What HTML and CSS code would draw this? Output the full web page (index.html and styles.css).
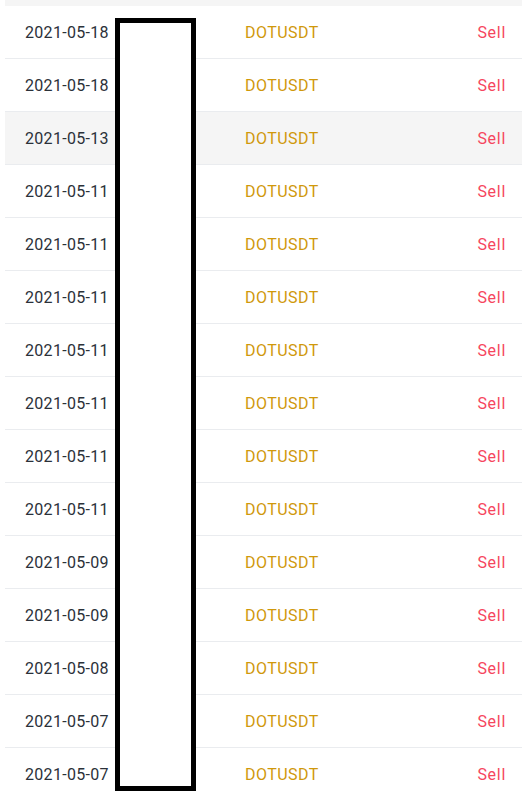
FILE: index.html
```html
<!DOCTYPE html>
<html>
<head>
<meta charset="utf-8">
<link rel="stylesheet" href="styles.css">
</head>
<body>
<div class="page">
  <div class="head-strip"></div>
  <div class="table">
    <div class="row"><span class="date">2021-05-18</span><span class="sym">DOTUSDT</span><span class="side">Sell</span></div>
    <div class="row"><span class="date">2021-05-18</span><span class="sym">DOTUSDT</span><span class="side">Sell</span></div>
    <div class="row hover"><span class="date">2021-05-13</span><span class="sym">DOTUSDT</span><span class="side">Sell</span></div>
    <div class="row"><span class="date">2021-05-11</span><span class="sym">DOTUSDT</span><span class="side">Sell</span></div>
    <div class="row"><span class="date">2021-05-11</span><span class="sym">DOTUSDT</span><span class="side">Sell</span></div>
    <div class="row"><span class="date">2021-05-11</span><span class="sym">DOTUSDT</span><span class="side">Sell</span></div>
    <div class="row"><span class="date">2021-05-11</span><span class="sym">DOTUSDT</span><span class="side">Sell</span></div>
    <div class="row"><span class="date">2021-05-11</span><span class="sym">DOTUSDT</span><span class="side">Sell</span></div>
    <div class="row"><span class="date">2021-05-11</span><span class="sym">DOTUSDT</span><span class="side">Sell</span></div>
    <div class="row"><span class="date">2021-05-11</span><span class="sym">DOTUSDT</span><span class="side">Sell</span></div>
    <div class="row"><span class="date">2021-05-09</span><span class="sym">DOTUSDT</span><span class="side">Sell</span></div>
    <div class="row"><span class="date">2021-05-09</span><span class="sym">DOTUSDT</span><span class="side">Sell</span></div>
    <div class="row"><span class="date">2021-05-08</span><span class="sym">DOTUSDT</span><span class="side">Sell</span></div>
    <div class="row"><span class="date">2021-05-07</span><span class="sym">DOTUSDT</span><span class="side">Sell</span></div>
    <div class="row"><span class="date">2021-05-07</span><span class="sym">DOTUSDT</span><span class="side">Sell</span></div>
  </div>
  <div class="redact"></div>
</div>
</body>
</html>
```

FILE: styles.css
```css
html, body {
  margin: 0;
  padding: 0;
  background: #ffffff;
  overflow: hidden;
}
.page {
  position: relative;
  padding-left: 5px;
  font-family: Roboto, "Noto Sans", sans-serif;
  font-size: 16px;
}
.head-strip {
  height: 6px;
  background: #f5f5f5;
}
.table {
  display: flex;
  flex-direction: column;
}
.row {
  display: grid;
  grid-template-columns: 240px 1fr auto;
  align-items: center;
  height: 52px;
  border-bottom: 1px solid #eaecef;
  padding-right: 16px;
}
.row.hover {
  background: #f5f5f5;
}
.date {
  padding-left: 20px;
  color: #2b3139;
  letter-spacing: 0.3px;
}
.sym {
  color: #d0980b;
  letter-spacing: 0.45px;
}
.side {
  color: #f6465d;
  letter-spacing: 0.7px;
}
.redact {
  position: absolute;
  left: 115px;
  top: 18px;
  width: 71px;
  height: 763px;
  border: 5px solid #000;
  background: #fff;
}
```
